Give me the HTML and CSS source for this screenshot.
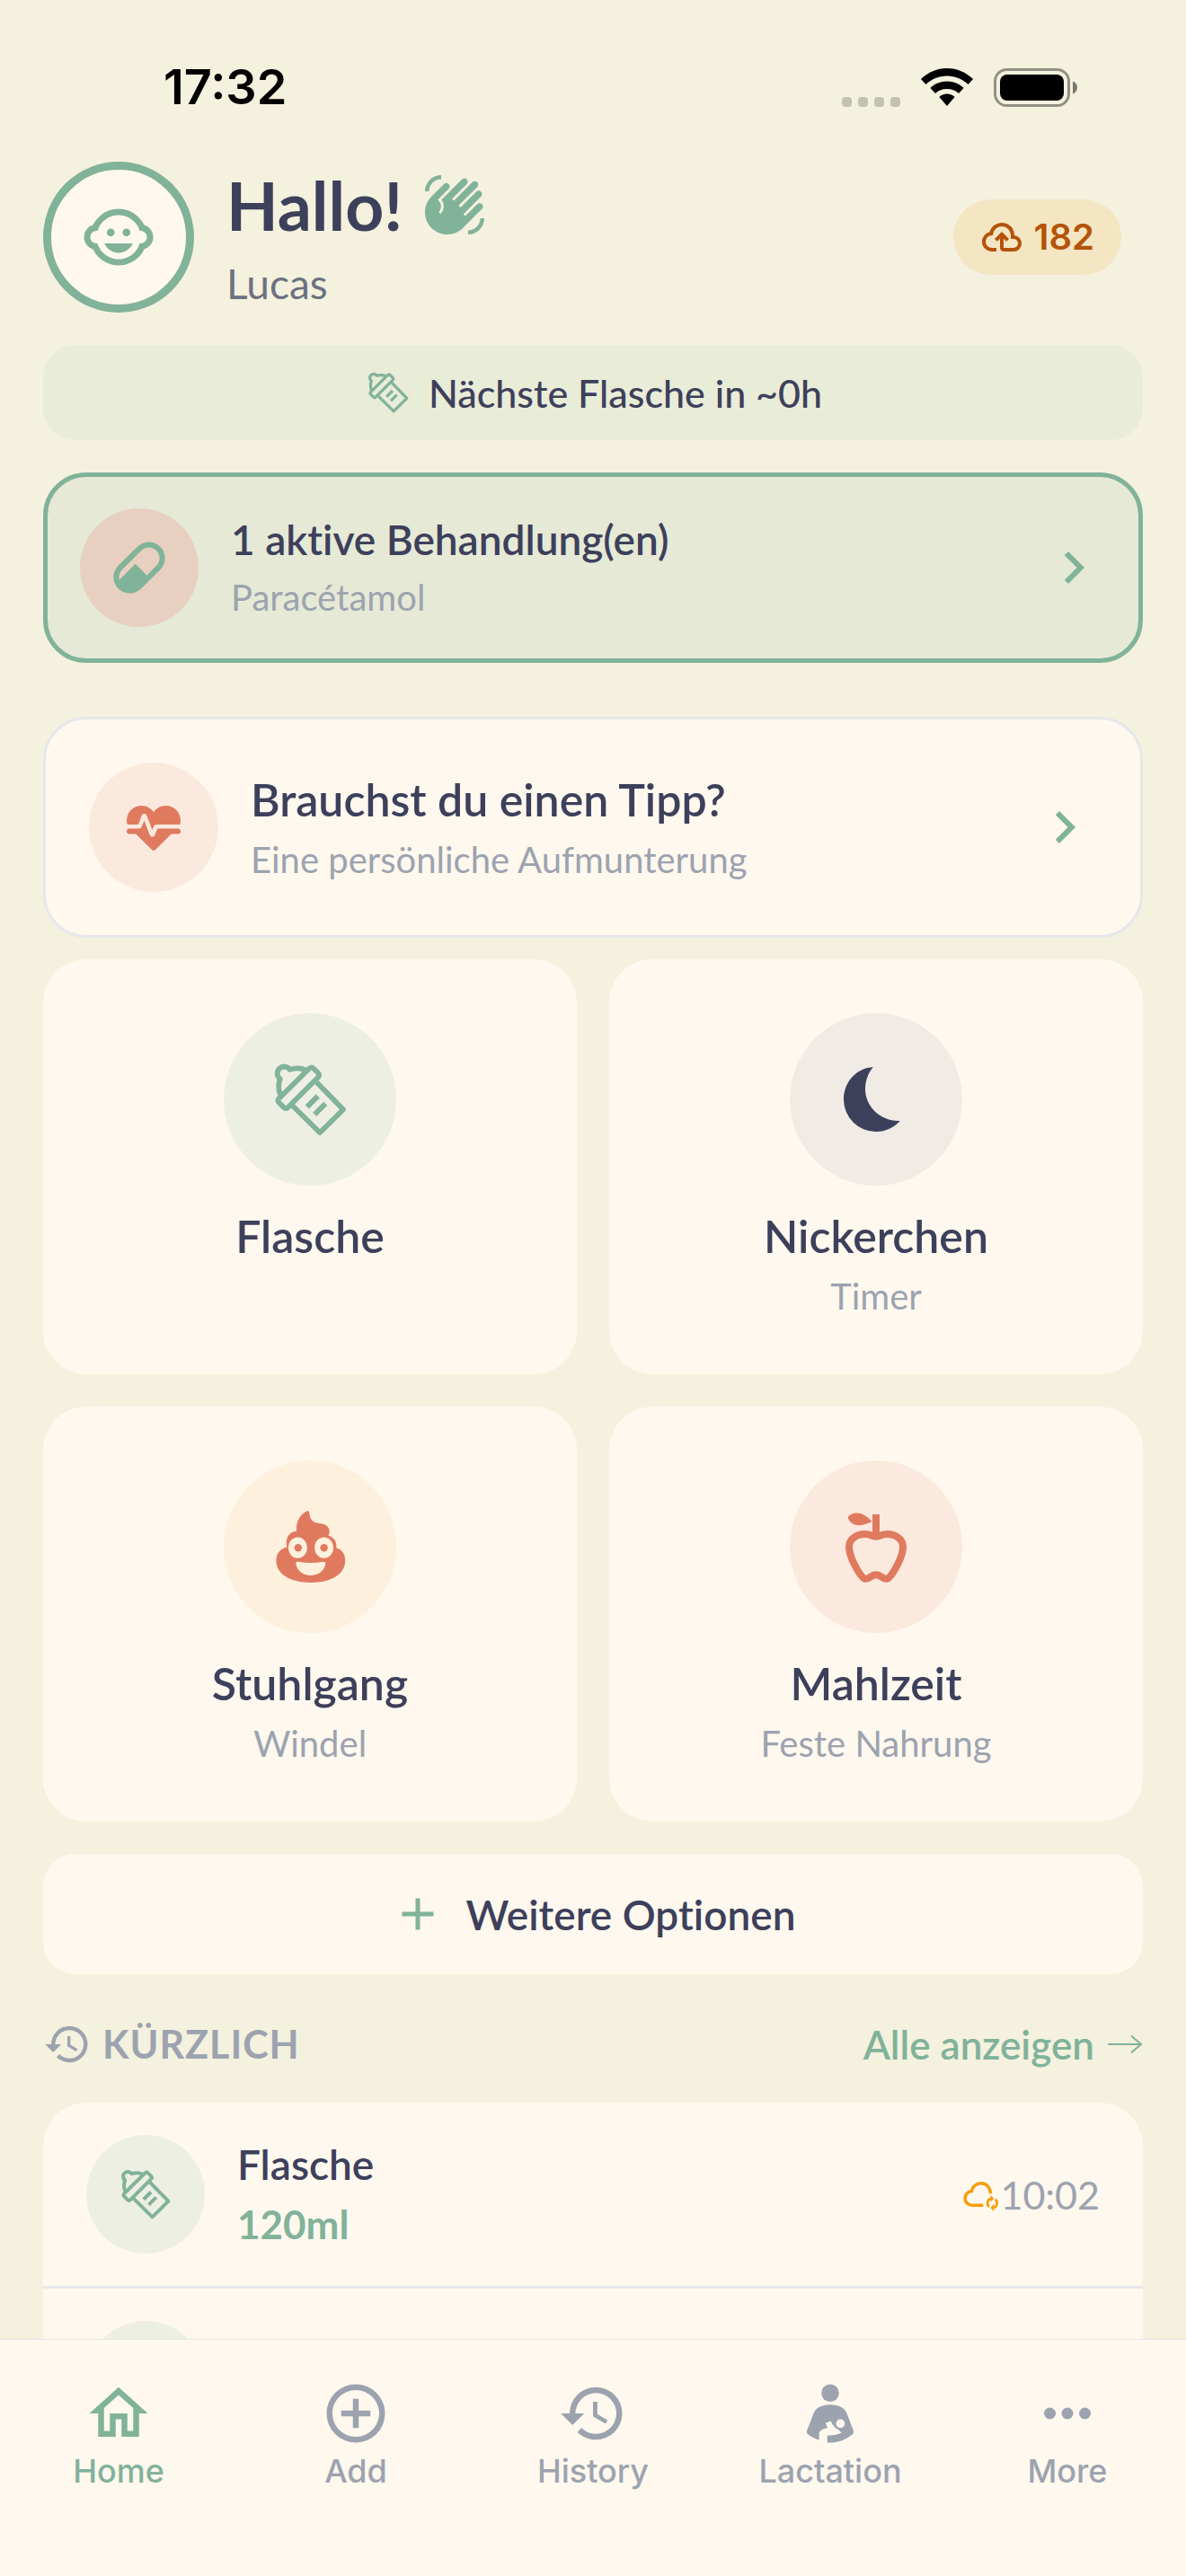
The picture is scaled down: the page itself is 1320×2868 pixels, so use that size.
FILE: index.html
```html
<!DOCTYPE html>
<html lang="de">
<head>
<meta charset="utf-8">
<meta name="viewport" content="width=device-width, initial-scale=1">
<title>Hallo!</title>
<link rel="stylesheet" href="styles.css">
</head>
<body>
<svg class="sprite" aria-hidden="true">
  <symbol id="bottle" viewBox="0 0 24 24">
    <g fill="none" stroke="currentColor" stroke-width="1.45" stroke-linejoin="round">
      <path d="M13.8 7.2 21.25 14.8 14.75 21.25 7.2 13.8"/>
      <path d="M11.9 3.3Q12.4 2.9 12.9 3.3L14.3 4.7Q14.8 5.3 14.3 5.8L5.8 14.3Q5.3 14.7 4.8 14.3L3.3 12.8Q2.9 12.3 3.3 11.8Z"/>
      <path d="M11 3.9C9.4 3.2 7.9 3.2 6.4 3.7A1.9 1.9 0 1 0 3.7 6.3C3.1 7.8 3.2 9.5 3.9 11.2"/>
      <path d="M11.2 14.1 14.2 11.1M13.3 16.2 16.3 13.2"/>
    </g>
  </symbol>
  <symbol id="chevron" viewBox="0 0 24 24"><path d="M8.59 16.58 13.17 12 8.59 7.41 10 6l6 6-6 6-1.41-1.42Z"/></symbol>
  <symbol id="history" viewBox="0 0 24 24"><path d="M13.5 8H12v5l4.28 2.54.72-1.21-3.5-2.08V8M13 3a9 9 0 0 0-9 9H1l3.96 4.03L9 12H6a7 7 0 0 1 7-7 7 7 0 0 1 7 7 7 7 0 0 1-7 7c-1.93 0-3.68-.79-4.94-2.06l-1.42 1.42C8.27 20 10.5 21 13 21a9 9 0 0 0 9-9 9 9 0 0 0-9-9"/></symbol>
</svg>

<div class="app">
  <div class="status">
    <time class="status-time">17:32</time>
    <div class="status-icons">
      <span class="signal"><i></i><i></i><i></i><i></i></span>
      <svg class="wifi" viewBox="0 0 58 42" aria-hidden="true">
        <path d="M29 0C40 0 50 4.400 58 12l-5.500 6C46 12 38 8.500 29 8.500S12 12 5.500 18L0 12C8 4.400 18 0 29 0Z"/>
        <path d="M29 14.500c7.200 0 13.700 2.800 18.600 7.500L42 28c-3.500-3.200-8-5-13-5s-9.500 1.800-13 5l-5.600-6C15.300 17.300 21.800 14.500 29 14.500Z"/>
        <path d="M29 28.500c3.400 0 6.400 1.200 8.600 3.500L29 42l-8.600-10c2.200-2.300 5.200-3.500 8.600-3.500Z"/>
      </svg>
      <svg class="battery" viewBox="0 0 94 43" aria-hidden="true">
        <rect x="1.500" y="1.500" width="82" height="40" rx="13" fill="none" stroke="#000" stroke-opacity=".4" stroke-width="3"/>
        <rect x="7" y="7" width="71" height="29" rx="8"/>
        <path d="M88 14.500c3 1 5 3.800 5 7s-2 6-5 7Z" fill-opacity=".5"/>
      </svg>
    </div>
  </div>

  <main class="content">
    <header class="header">
      <span class="avatar">
        <svg class="icon-84" viewBox="0 0 24 24" aria-hidden="true"><circle cx="14.500" cy="10.500" r="1.250"/><circle cx="9.500" cy="10.500" r="1.250"/><path d="M22.940 12.660c.04-.21.06-.43.06-.66s-.02-.45-.06-.66c-.25-1.510-1.360-2.740-2.810-3.170-.53-1.120-1.280-2.100-2.190-2.910C16.360 3.850 14.280 3 12 3s-4.360.85-5.940 2.260c-.92.81-1.670 1.800-2.190 2.910-1.450.43-2.560 1.650-2.810 3.170-.04.21-.06.43-.06.66s.02.45.06.66c.25 1.510 1.360 2.740 2.810 3.170.52 1.110 1.270 2.090 2.170 2.890C7.620 20.140 9.710 21 12 21s4.380-.86 5.970-2.280c.9-.8 1.650-1.790 2.170-2.890 1.440-.43 2.550-1.650 2.800-3.170zM19 14c-.1 0-.19-.02-.29-.03-.2.67-.49 1.290-.86 1.860C16.600 17.740 14.450 19 12 19s-4.600-1.260-5.850-3.170c-.37-.57-.66-1.190-.86-1.860-.1.010-.19.030-.29.030-1.100 0-2-.9-2-2s.9-2 2-2c.1 0 .19.020.29.030.2-.67.49-1.290.86-1.860C7.400 6.260 9.550 5 12 5s4.600 1.260 5.850 3.170c.37.57.66 1.190.86 1.860.1-.010.19-.030.29-.030 1.100 0 2 .9 2 2s-.9 2-2 2zM7.500 14c.76 1.770 2.490 3 4.500 3s3.740-1.230 4.500-3h-9z"/></svg>
      </span>
      <div class="greeting">
        <h1>Hallo! <svg class="icon-72" viewBox="0 0 24 24" aria-hidden="true"><path d="M23,17c0,3.310-2.690,6-6,6v-1.500c2.480,0,4.500-2.020,4.500-4.500H23z M1,7c0-3.310,2.690-6,6-6v1.500C4.520,2.500,2.500,4.520,2.500,7H1z M8.010,4.320l-4.600,4.600c-3.220,3.220-3.220,8.450,0,11.670s8.450,3.220,11.670,0l7.070-7.070c0.490-0.490,0.490-1.280,0-1.770c-0.490-0.490-1.280-0.490-1.770,0l-4.420,4.420l-0.710-0.710l6.540-6.540c0.490-0.490,0.490-1.280,0-1.770s-1.280-0.490-1.770,0l-5.830,5.830l-0.710-0.710l6.890-6.890c0.490-0.490,0.490-1.280,0-1.770s-1.280-0.490-1.770,0l-6.890,6.890L11.020,9.800l5.480-5.480c0.490-0.490,0.490-1.280,0-1.770s-1.280-0.490-1.770,0l-7.620,7.620c1.220,1.570,1.110,3.840-0.330,5.280l-0.710-0.710c1.170-1.170,1.170-3.070,0-4.240l-0.350-0.350l4.070-4.070c0.490-0.490,0.490-1.280,0-1.770C9.290,3.830,8.500,3.830,8.010,4.320z"/></svg></h1>
        <p>Lucas</p>
      </div>
      <button class="sync-badge" type="button">
        <svg class="icon-48" viewBox="0 0 24 24" aria-hidden="true"><path d="M6.500 20Q4.220 20 2.610 18.430 1 16.850 1 14.580 1 12.630 2.170 11.100 3.350 9.570 5.250 9.150 5.880 6.850 7.750 5.430 9.630 4 12 4 14.930 4 16.960 6.040 19 8.070 19 11 20.730 11.200 21.860 12.500 23 13.780 23 15.500 23 17.380 21.690 18.690 20.380 20 18.500 20H13Q12.180 20 11.590 19.410 11 18.830 11 18V12.850L9.400 14.400 8 13 12 9 16 13 14.600 14.400 13 12.850V18H18.500Q19.550 18 20.270 17.270 21 16.550 21 15.500 21 14.450 20.270 13.730 19.550 13 18.500 13H17V11Q17 8.930 15.540 7.460 14.080 6 12 6 9.930 6 8.460 7.460 7 8.930 7 11H6.500Q5.050 11 4.030 12.030 3 13.050 3 14.500 3 15.950 4.030 17 5.050 18 6.500 18H9V20Z"/></svg>
        182
      </button>
    </header>

    <p class="next-bottle"><svg class="icon-54"><use href="#bottle"/></svg>Nächste Flasche in ~0h</p>

    <button class="banner treatment" type="button">
      <span class="disc disc-132 tint-pill">
        <svg class="icon-72" viewBox="0 0 24 24" aria-hidden="true"><path d="M4.220 11.290l7.070-7.070c2.350-2.340 6.140-2.340 8.490 0 2.340 2.340 2.340 6.140 0 8.490l-7.070 7.070c-2.350 2.340-6.150 2.340-8.490 0-2.340-2.350-2.340-6.140 0-8.490m1.420 1.420c-1.050 1.040-1.400 2.530-1.040 3.860l5.990-5.980 4.240 4.240 3.530-3.540c1.570-1.560 1.570-4.090 0-5.650-1.560-1.570-4.090-1.570-5.650 0z"/></svg>
      </span>
      <span class="stack"><strong class="item-title">1 aktive Behandlung(en)</strong><small>Paracétamol</small></span>
      <svg class="icon-72 mint"><use href="#chevron"/></svg>
    </button>

    <button class="banner tip" type="button">
      <span class="disc disc-144 tint-coral">
        <svg class="icon-72" viewBox="0 0 24 24" aria-hidden="true"><path d="M7.500 4A5.500 5.500 0 0 0 2 9.500c0 .5.090 1 .22 1.500H6.300l1.270-3.370c.3-.8 1.480-.88 1.860 0L11.500 13l.59-1.420c.13-.33.480-.58.910-.58h8.780c.13-.5.220-1 .220-1.500A5.500 5.500 0 0 0 16.500 4C14.640 4 13 4.930 12 6.340 11 4.930 9.360 4 7.500 4M3 12.500a1 1 0 0 0-1 1 1 1 0 0 0 1 1h2.440L11 20c1 .9 1 .9 2 0l5.560-5.500H21a1 1 0 0 0 1-1 1 1 0 0 0-1-1h-7.600l-.93 2.300c-.4 1.010-1.550.870-1.920.030L8.500 9.500l-.96 2.330c-.15.380-.490.670-.940.670z"/></svg>
      </span>
      <span class="stack"><strong class="card-title">Brauchst du einen Tipp?</strong><small>Eine persönliche Aufmunterung</small></span>
      <svg class="icon-72 mint"><use href="#chevron"/></svg>
    </button>

    <section class="cards">
      <button class="card" type="button">
        <span class="disc disc-192 tint-mint"><svg class="icon-96"><use href="#bottle"/></svg></span>
        <strong class="card-title">Flasche</strong>
      </button>
      <button class="card" type="button">
        <span class="disc disc-192 tint-night"><svg class="icon-96" viewBox="0 0 24 24" aria-hidden="true"><path d="M11.200 3C6.500 3.300 3 7.200 3 12a9 9 0 0 0 9 9c2.700 0 5-1.200 6.700-3C12.700 18.100 9 13.500 9 9.200 9 6.700 9.900 4.500 11.200 3Z"/></svg></span>
        <strong class="card-title">Nickerchen</strong><small>Timer</small>
      </button>
      <button class="card" type="button">
        <span class="disc disc-192 tint-sand"><svg class="icon-96" viewBox="0 0 24 24" aria-hidden="true"><path fill-rule="evenodd" d="M11.400 2C11.900 2 11.800 3.200 12.200 4.100 13 5.800 14.800 5.100 16.400 6 17.500 6.700 17.700 8 17.100 8.900 18.800 9.500 19.600 10.900 19.300 12.300 21 12.800 21.800 14.100 21.800 15.900 21.800 19.600 18 22 12.400 22 6.200 22 2.600 19.500 2.600 15.900 2.600 13.900 3.700 12.500 5.600 12.100 5 9.500 6.200 7.900 8.300 7.600 7.900 5.500 9.200 2.800 11.400 2ZM8.600 9.400C7.100 9.400 6 10.700 6 12.300S7.100 15.200 8.600 15.200 11.200 13.900 11.200 12.300 10.100 9.400 8.600 9.400ZM15.900 9.400C14.400 9.400 13.300 10.700 13.300 12.300S14.400 15.200 15.900 15.200 18.500 13.900 18.500 12.300 17.400 9.400 15.900 9.400ZM8.700 16.200C8.200 16.100 8 16.400 8.100 16.900 8.400 18.700 10.100 20 12.200 20S16 18.700 16.300 16.900C16.400 16.400 16.200 16.100 15.700 16.200 13.400 16.600 11 16.600 8.700 16.200Z"/><circle cx="8.700" cy="12.300" r="1.050"/><circle cx="15.900" cy="12.300" r="1.050"/></svg></span>
        <strong class="card-title">Stuhlgang</strong><small>Windel</small>
      </button>
      <button class="card" type="button">
        <span class="disc disc-192 tint-coral"><svg class="icon-96" viewBox="0 0 24 24" aria-hidden="true"><path fill="none" stroke="currentColor" stroke-width="2" d="M12 9.200C11 9.200 10.600 8.500 8.800 8.500 6.600 8.500 4.500 9.900 4.500 12.100 4.500 15 7.700 20.500 8.800 20.900 10.300 21.300 10.500 19.800 12 19.800S13.700 21.300 15.200 20.900C16.300 20.500 19.500 15 19.500 12.100 19.500 9.900 17.400 8.500 15.200 8.500 13.400 8.500 13 9.200 12 9.200Z"/><path d="M11 3h2v6h-2zM4.100 3.800C5.600 2 8.400 2.100 10.900 5 7.600 6.700 5 6.300 4.100 3.800Z"/></svg></span>
        <strong class="card-title">Mahlzeit</strong><small>Feste Nahrung</small>
      </button>
    </section>

    <button class="more-options" type="button">
      <svg class="icon-60 mint" viewBox="0 0 24 24" aria-hidden="true"><path d="M19 13h-6v6h-2v-6H5v-2h6V5h2v6h6z"/></svg>Weitere Optionen
    </button>

    <section class="recent">
      <div class="recent-head">
        <h2><svg class="icon-54"><use href="#history"/></svg>KÜRZLICH</h2>
        <a href="#history-all">Alle anzeigen <svg class="arrow" viewBox="0 0 40 24" aria-hidden="true"><path d="M1 12H38M27 2.500 38 12 27 21.500" fill="none" stroke="currentColor" stroke-width="2"/></svg></a>
      </div>
      <ul class="entries">
        <li>
          <span class="disc disc-132 tint-mint"><svg class="icon-66"><use href="#bottle"/></svg></span>
          <span class="stack"><strong class="item-title">Flasche</strong><b>120ml</b></span>
          <svg class="icon-42 pending" viewBox="0 0 24 24" aria-hidden="true"><path fill="none" stroke="currentColor" stroke-width="2" d="M13.300 19H6.500A4.400 4.400 0 0 1 6 10C6.500 7 9 5 12 5 15.300 5 17.700 7.600 18 11.500"/><path fill="none" stroke="currentColor" stroke-width="1.500" d="M18.300 14.700H18A3.100 3.100 0 0 0 17.200 20M20 20.600A3.100 3.100 0 0 0 21 15.300"/><path d="M18 12.400V17L20.200 14.700ZM20.100 18.200V23L17.900 20.600Z"/></svg>
          <time>10:02</time>
        </li>
        <li>
          <span class="disc disc-132 tint-mint"><svg class="icon-66"><use href="#bottle"/></svg></span>
        </li>
      </ul>
    </section>
  </main>

  <nav class="tabs">
    <a class="active" href="#home"><svg class="icon-78" viewBox="0 0 24 24" aria-hidden="true"><path d="M12 5.690l5 4.500V18h-2v-6H9v6H7v-7.810l5-4.500M12 3 2 12h3v8h6v-6h2v6h6v-8h3L12 3z"/></svg>Home</a>
    <a href="#add"><svg class="icon-78" viewBox="0 0 24 24" aria-hidden="true"><path d="M12 20c-4.410 0-8-3.590-8-8s3.590-8 8-8 8 3.590 8 8-3.590 8-8 8m0-18A10 10 0 0 0 2 12a10 10 0 0 0 10 10 10 10 0 0 0 10-10A10 10 0 0 0 12 2m1 5h-2v4H7v2h4v4h2v-4h4v-2h-4V7z"/></svg>Add</a>
    <a href="#history-tab"><svg class="icon-78"><use href="#history"/></svg>History</a>
    <a href="#lactation"><svg class="icon-78" viewBox="0 0 24 24" aria-hidden="true"><circle cx="12" cy="5" r="3"/><path fill-rule="evenodd" d="M12 9C15 9 17.100 10.200 17.700 12L20 18C20.100 18.600 19.900 18.900 19.500 19.200 17 21.200 14.500 22.100 11 22V19.500C12.800 19.600 14.500 19.300 15.900 18.600L14.800 17.500C13.600 17 12.800 16 12.200 14.600L10.400 15.300 11.100 17C9.400 17.200 8.200 18 8.200 19V21.100C6.800 20.700 5.600 20 4.500 19.200 4.100 18.900 3.900 18.600 4 18L6.300 12C6.900 10.200 9 9 12 9ZM15.500 14A1.500 1.500 0 1 0 15.500 17 1.500 1.500 0 1 0 15.500 14Z"/></svg>Lactation</a>
    <a href="#more"><svg class="icon-78" viewBox="0 0 24 24" aria-hidden="true"><circle cx="6" cy="12" r="2"/><circle cx="12" cy="12" r="2"/><circle cx="18" cy="12" r="2"/></svg>More</a>
  </nav>
</div>
</body>
</html>
```

FILE: styles.css
```css
:root {
  --page: #f4f1de;
  --surface: #fff8ee;
  --ink: #3d405b;
  --mint: #81b29a;
  --coral: #e07a5f;
  --muted: #9ca3af;
  --line: #e5e7eb;
  --ui: Inter, "Liberation Sans", sans-serif;
}

* { box-sizing: border-box; }

body, h1, h2, p, ul { margin: 0; padding: 0; }

body {
  background: var(--page);
  color: var(--ink);
  font-family: Lato, "Open Sans", sans-serif;
  font-variant-ligatures: none;
}

svg { flex: none; fill: currentColor; }

button {
  border: 0;
  padding: 0;
  background: none;
  color: inherit;
  font: inherit;
  font-variant-ligatures: none;
  text-align: left;
}

a { color: inherit; text-decoration: none; }

.sprite { position: absolute; width: 0; height: 0; }

.icon-42 { width: 42px; height: 42px; }
.icon-48 { width: 48px; height: 48px; }
.icon-54 { width: 54px; height: 54px; }
.icon-60 { width: 60px; height: 60px; }
.icon-66 { width: 66px; height: 66px; }
.icon-72 { width: 72px; height: 72px; }
.icon-78 { width: 78px; height: 78px; }
.icon-84 { width: 84px; height: 84px; }
.icon-96 { width: 96px; height: 96px; }

.mint { color: var(--mint); }

.app {
  display: flex;
  flex-direction: column;
  height: 100vh;
  overflow: hidden;
}

/* Status bar */
.status {
  flex: none;
  display: flex;
  align-items: center;
  justify-content: space-between;
  height: 180px;
  padding: 14px 120px 0 182px;
  color: #000;
}

.status-time { font: 600 54px/60px var(--ui); }
.status-icons { display: flex; align-items: center; gap: 23px; }
.signal { display: flex; align-self: flex-end; gap: 7px; }
.signal i { width: 11px; height: 11px; border-radius: 4px; background: #c3c1b2; }
.wifi { width: 58px; height: 42px; }
.battery { width: 94px; height: 43px; }

/* Scrolling content */
.content {
  flex: 1;
  min-height: 0;
  overflow: hidden;
  padding: 0 48px;
}

.header { display: flex; align-items: center; gap: 36px; padding-right: 24px; }

.avatar {
  display: grid;
  place-items: center;
  width: 168px;
  height: 168px;
  border: 9px solid var(--mint);
  border-radius: 50%;
  background: var(--surface);
  color: var(--mint);
}

.greeting { flex: 1; }
.greeting h1 { display: flex; align-items: center; gap: 22px; font-size: 75px; line-height: 92px; font-weight: 700; }
.greeting h1 svg { color: var(--mint); }
.greeting p { padding-top: 12px; color: #6b7280; font-size: 46px; line-height: 60px; }

.sync-badge {
  display: flex;
  align-items: center;
  gap: 12px;
  height: 84px;
  padding: 0 30px;
  border-radius: 42px;
  background: #f4e6c3;
  color: #b45309;
  font: 600 40px/48px var(--ui);
}

.next-bottle {
  display: flex;
  align-items: center;
  justify-content: center;
  gap: 18px;
  height: 106px;
  margin-top: 36px;
  border-radius: 36px;
  background: #e9ecd7;
  font-size: 43px;
  font-weight: 500;
}
.next-bottle svg { color: var(--mint); }

.disc {
  flex: none;
  display: grid;
  place-items: center;
  border-radius: 50%;
}
.disc-132 { width: 132px; height: 132px; }
.disc-144 { width: 144px; height: 144px; }
.disc-192 { width: 192px; height: 192px; }

.tint-mint { background: #eeefe4; color: var(--mint); }
.tint-night { background: #f0ebe5; color: var(--ink); }
.tint-sand { background: #fdf0dd; color: var(--coral); }
.tint-coral { background: #fbe9de; color: var(--coral); }
.tint-pill { background: #e7d0c0; color: var(--mint); }

.item-title { font-size: 46px; line-height: 58px; font-weight: 600; }
.card-title { font-size: 50px; line-height: 64px; font-weight: 600; }

small { color: var(--muted); font-size: 40px; line-height: 54px; }

.stack { flex: 1; display: flex; flex-direction: column; gap: 8px; }

.banner {
  display: flex;
  align-items: center;
  gap: 36px;
  width: 100%;
  border-radius: 48px;
}
.treatment {
  margin-top: 36px;
  padding: 35px 36px;
  border: 5px solid var(--mint);
  background: #e5e9d6;
}
.tip {
  margin-top: 60px;
  padding: 48px;
  border: 3px solid var(--line);
  background: var(--surface);
}

.cards {
  display: grid;
  grid-template-columns: 1fr 1fr;
  gap: 36px;
  margin-top: 24px;
}
.card {
  display: flex;
  flex-direction: column;
  align-items: center;
  gap: 8px;
  padding: 60px 24px;
  border-radius: 48px;
  background: var(--surface);
}
.card .disc { margin-bottom: 16px; }

.more-options {
  display: flex;
  align-items: center;
  justify-content: center;
  gap: 24px;
  width: 100%;
  height: 134px;
  margin-top: 36px;
  border-radius: 36px;
  background: var(--surface);
  font-size: 46px;
  font-weight: 600;
}

/* Recent entries */
.recent-head {
  display: flex;
  align-items: center;
  justify-content: space-between;
  height: 59px;
  margin: 48px 0 36px;
  font-size: 44px;
}
.recent-head h2 {
  display: flex;
  align-items: center;
  gap: 12px;
  color: var(--muted);
  font-size: 43px;
  font-weight: 700;
  letter-spacing: 1px;
}
.recent-head a { display: flex; align-items: center; gap: 14px; color: var(--mint); font-weight: 600; }
.arrow { width: 40px; height: 24px; }

.entries {
  list-style: none;
  border-radius: 48px 48px 0 0;
  background: var(--surface);
}
.entries li { display: flex; align-items: center; padding: 36px 48px; }
.entries li + li { border-top: 3px solid var(--line); }
.entries .stack { padding-left: 36px; }
.entries b { color: var(--mint); font-size: 44px; line-height: 58px; }
.entries time { color: var(--muted); font-size: 43px; }
.pending { color: #f59e0b; }

/* Bottom tabs */
.tabs {
  flex: none;
  display: grid;
  grid-template-columns: repeat(5, 1fr);
  padding: 43px 0 92px;
  border-top: 1px solid var(--line);
  background: var(--surface);
  color: var(--muted);
  font: 500 36px/50px var(--ui);
}
.tabs a { display: flex; flex-direction: column; align-items: center; }
.tabs .active { color: var(--mint); }
```
